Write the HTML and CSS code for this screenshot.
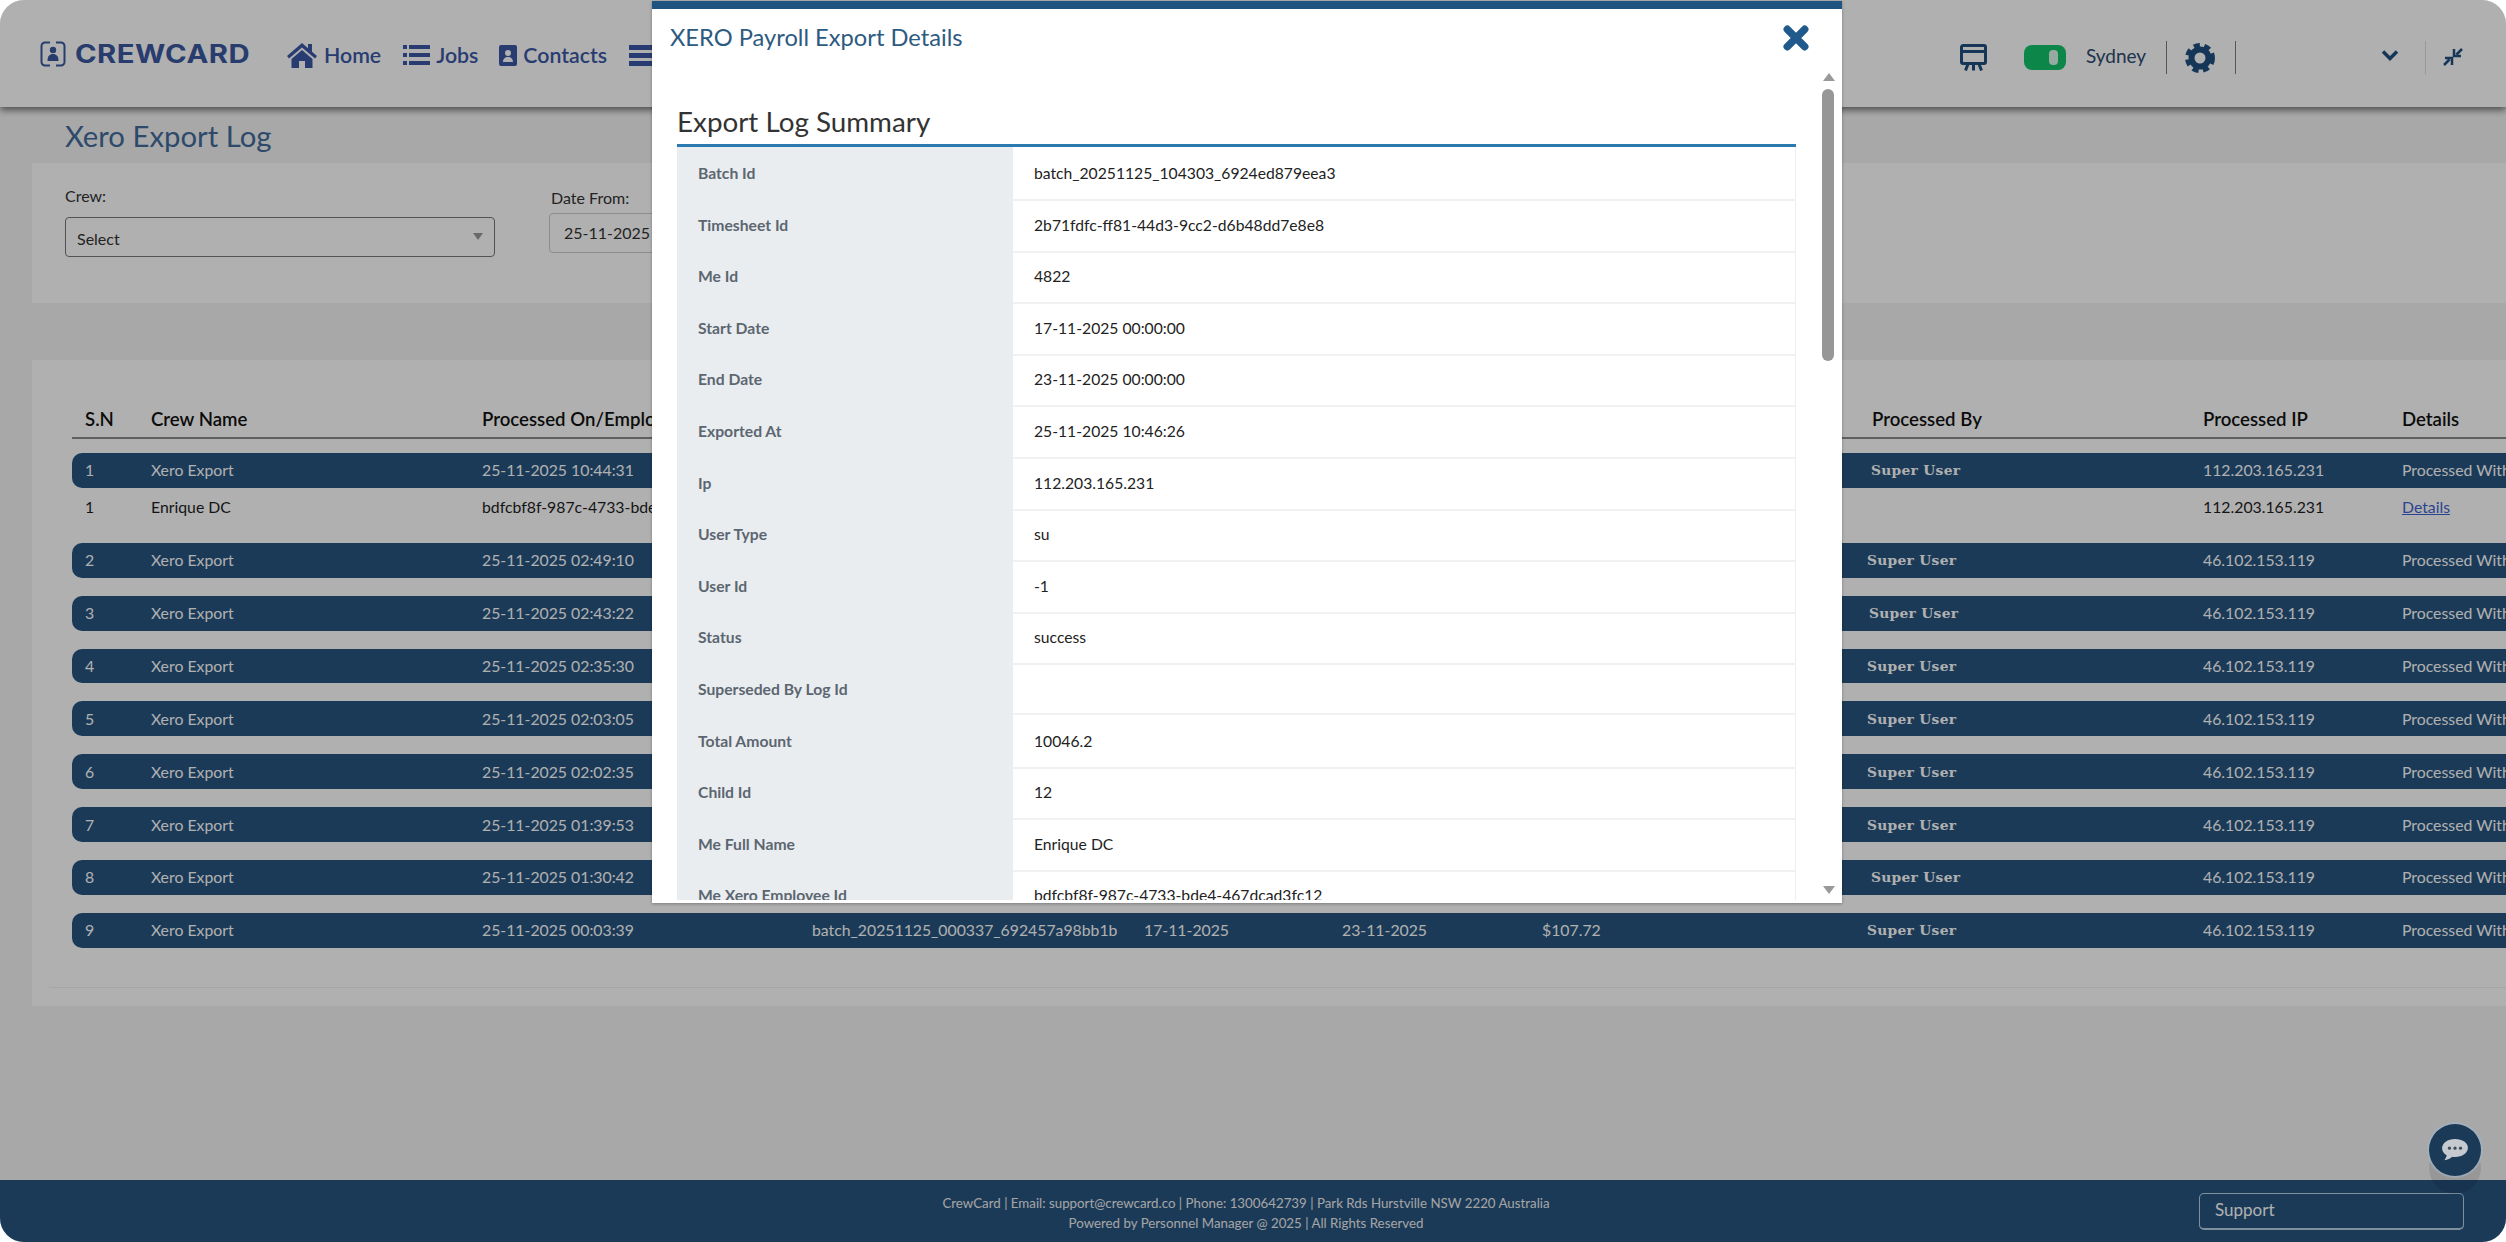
FILE: index.html
```html
<!DOCTYPE html>
<html lang="en">
<head>
<meta charset="utf-8">
<title>Xero Export Log</title>
<link rel="stylesheet" href="styles.css">
</head>
<body>
<div class="app">
  <header class="topbar">
    <div class="logo">
      <svg class="logo-icon" viewBox="0 0 26 26"><path d="M10 1.5H5A3.5 3.5 0 0 0 1.5 5v16A3.5 3.5 0 0 0 5 24.500h5M16 1.500h5A3.500 3.500 0 0 1 24.500 5v16a3.500 3.500 0 0 1-3.500 3.500h-5" fill="none" stroke="currentColor" stroke-width="2"/><circle cx="13" cy="9" r="3.200" fill="currentColor"/><path d="M7.500 20c0-5 2-7 5.500-7s5.500 2 5.500 7z" fill="currentColor"/></svg>
      <span class="logo-text">CREWCARD</span>
    </div>
    <nav class="nav">
      <a class="nav-item nav-home"><svg class="ico-home" viewBox="0 0 30 26"><path d="M15 1 0 14l2 2.500L15 5.500l13 11 2-2.500-5-4.300V2h-4v4.200z" fill="currentColor"/><path d="M15 8 4.500 17v9H12v-7h6v7h7.500v-9z" fill="currentColor"/></svg>Home</a>
      <a class="nav-item nav-jobs"><svg class="ico-list" viewBox="0 0 27 22"><path d="M0 1h4v4H0zM6 1h21v4H6zM0 9h4v4H0zM6 9h21v4H6zM0 17h4v4H0zM6 17h21v4H6z" fill="currentColor"/></svg>Jobs</a>
      <a class="nav-item nav-contacts"><svg class="ico-contact" viewBox="0 0 18 22"><path fill-rule="evenodd" d="M2 1h14a2 2 0 0 1 2 2v17a2 2 0 0 1-2 2H2a2 2 0 0 1-2-2V3a2 2 0 0 1 2-2zm7 5a3 3 0 1 0 0 6 3 3 0 0 0 0-6zm-5 12h10c0-3-2-5-5-5s-5 2-5 5z" fill="currentColor"/></svg>Contacts</a>
      <a class="nav-item"><svg class="ico-list" viewBox="0 0 27 22"><path d="M0 1h27v5H0zM0 9h27v5H0zM0 17h27v5H0z" fill="currentColor"/></svg></a>
    </nav>
    <div class="tools">
      <svg class="ico-screen" viewBox="0 0 27 27"><path d="M3 1.500h21a1.500 1.500 0 0 1 1.500 1.500v15a1.500 1.500 0 0 1-1.500 1.500H3A1.500 1.500 0 0 1 1.500 18V3A1.500 1.500 0 0 1 3 1.500zM1.500 7.500h24M8 20l-2.500 6.500M13.500 20v6.500M19 20l2.500 6.500" fill="none" stroke="currentColor" stroke-width="3"/></svg>
      <span class="toggle"><span class="knob"></span></span>
      <span class="city">Sydney</span>
      <span class="divider"></span>
      <svg class="ico-gear" viewBox="0 0 30 30"><circle cx="15" cy="15" r="8.500" fill="none" stroke="currentColor" stroke-width="6"/><circle cx="15" cy="15" r="12.500" fill="none" stroke="currentColor" stroke-width="5" stroke-dasharray="6 4.470"/></svg>
      <span class="divider"></span>
      <svg class="ico-chevron" viewBox="0 0 18 12"><path d="M2 2.500 9 9.500l7-7" fill="none" stroke="currentColor" stroke-width="3.500"/></svg>
      <span class="divider divider-faint"></span>
      <svg class="ico-compress" viewBox="0 0 20 18"><path d="M19 1 13.500 6.500M11 1v7h7M1 17l5.500-5.500M9 17v-7H2" fill="none" stroke="currentColor" stroke-width="2.500"/></svg>
    </div>
  </header>

  <main class="main">
    <h1 class="page-title">Xero Export Log</h1>
    <section class="filters">
      <div class="field">
        <label class="field-label">Crew:</label>
        <div class="select">Select<span class="caret"></span></div>
      </div>
      <div class="field field-date">
        <label class="field-label">Date From:</label>
        <div class="date-input">25-11-2025</div>
      </div>
    </section>

    <section class="log-card">
      <div class="log-row log-head">
        <span>S.N</span><span>Crew Name</span><span>Processed On/Employee Id</span><span></span><span></span><span></span><span></span><span>Processed By</span><span>Processed IP</span><span>Details</span>
      </div>
      <div class="log-row bar first"><span>1</span><span>Xero Export</span><span>25-11-2025 10:44:31</span><span></span><span></span><span></span><span></span><span class="by by-a">Super User</span><span>112.203.165.231</span><span>Processed With</span></div>
      <div class="log-row sub"><span>1</span><span>Enrique DC</span><span>bdfcbf8f-987c-4733-bde4-467dcad3fc12</span><span></span><span></span><span></span><span></span><span></span><span>112.203.165.231</span><span><a class="link">Details</a></span></div>
      <div class="log-row bar"><span>2</span><span>Xero Export</span><span>25-11-2025 02:49:10</span><span></span><span></span><span></span><span></span><span class="by by-c">Super User</span><span>46.102.153.119</span><span>Processed With</span></div>
      <div class="log-row bar"><span>3</span><span>Xero Export</span><span>25-11-2025 02:43:22</span><span></span><span></span><span></span><span></span><span class="by by-b">Super User</span><span>46.102.153.119</span><span>Processed With</span></div>
      <div class="log-row bar"><span>4</span><span>Xero Export</span><span>25-11-2025 02:35:30</span><span></span><span></span><span></span><span></span><span class="by by-c">Super User</span><span>46.102.153.119</span><span>Processed With</span></div>
      <div class="log-row bar"><span>5</span><span>Xero Export</span><span>25-11-2025 02:03:05</span><span></span><span></span><span></span><span></span><span class="by by-c">Super User</span><span>46.102.153.119</span><span>Processed With</span></div>
      <div class="log-row bar"><span>6</span><span>Xero Export</span><span>25-11-2025 02:02:35</span><span></span><span></span><span></span><span></span><span class="by by-c">Super User</span><span>46.102.153.119</span><span>Processed With</span></div>
      <div class="log-row bar"><span>7</span><span>Xero Export</span><span>25-11-2025 01:39:53</span><span></span><span></span><span></span><span></span><span class="by by-c">Super User</span><span>46.102.153.119</span><span>Processed With</span></div>
      <div class="log-row bar"><span>8</span><span>Xero Export</span><span>25-11-2025 01:30:42</span><span></span><span></span><span></span><span></span><span class="by by-a">Super User</span><span>46.102.153.119</span><span>Processed With</span></div>
      <div class="log-row bar"><span>9</span><span>Xero Export</span><span>25-11-2025 00:03:39</span><span>batch_20251125_000337_692457a98bb1b</span><span>17-11-2025</span><span>23-11-2025</span><span>$107.72</span><span class="by by-c">Super User</span><span>46.102.153.119</span><span>Processed With</span></div>
      <div class="card-rule"></div>
    </section>
  </main>

  <footer class="footer">
    <div class="footer-text">
      <p>CrewCard | Email: support@crewcard.co | Phone: 1300642739 | Park Rds Hurstville NSW 2220 Australia</p>
      <p>Powered by Personnel Manager @ 2025 | All Rights Reserved</p>
    </div>
    <div class="support">Support</div>
  </footer>

  <div class="chat-shadow"></div>
  <div class="overlay">
    <div class="modal">
      <div class="modal-head">
        <h2 class="modal-title">XERO Payroll Export Details</h2>
        <svg class="ico-close" viewBox="0 0 24 24"><path d="M4 4l16 16M20 4 4 20" fill="none" stroke="currentColor" stroke-width="7" stroke-linecap="round"/></svg>
      </div>
      <div class="modal-body">
        <h3 class="summary-title">Export Log Summary</h3>
        <div class="kv"><span class="k">Batch Id</span><span class="v">batch_20251125_104303_6924ed879eea3</span></div>
        <div class="kv"><span class="k">Timesheet Id</span><span class="v">2b71fdfc-ff81-44d3-9cc2-d6b48dd7e8e8</span></div>
        <div class="kv"><span class="k">Me Id</span><span class="v">4822</span></div>
        <div class="kv"><span class="k">Start Date</span><span class="v">17-11-2025 00:00:00</span></div>
        <div class="kv"><span class="k">End Date</span><span class="v">23-11-2025 00:00:00</span></div>
        <div class="kv"><span class="k">Exported At</span><span class="v">25-11-2025 10:46:26</span></div>
        <div class="kv"><span class="k">Ip</span><span class="v">112.203.165.231</span></div>
        <div class="kv"><span class="k">User Type</span><span class="v">su</span></div>
        <div class="kv"><span class="k">User Id</span><span class="v">-1</span></div>
        <div class="kv"><span class="k">Status</span><span class="v">success</span></div>
        <div class="kv"><span class="k">Superseded By Log Id</span><span class="v"></span></div>
        <div class="kv"><span class="k">Total Amount</span><span class="v">10046.2</span></div>
        <div class="kv"><span class="k">Child Id</span><span class="v">12</span></div>
        <div class="kv"><span class="k">Me Full Name</span><span class="v">Enrique DC</span></div>
        <div class="kv"><span class="k">Me Xero Employee Id</span><span class="v">bdfcbf8f-987c-4733-bde4-467dcad3fc12</span></div>
      </div>
      <div class="scrollbar">
        <span class="arrow-up"></span>
        <span class="thumb"></span>
        <span class="arrow-down"></span>
      </div>
    </div>
  </div>
  <div class="chat">
    <svg class="ico-chat" viewBox="0 0 30 26"><path d="M15 1C7 1 1 5.500 1 11c0 3.200 2 6 5 7.800-.3 2-1.300 3.700-2.500 5.200 3.500-.4 6.500-1.800 8.500-3.600 1 .1 2 .2 3 .2 8 0 14-4.500 14-10S23 1 15 1z" fill="#c4cacf"/><circle cx="9" cy="11" r="1.700" fill="#3e4a55"/><circle cx="15" cy="11" r="1.700" fill="#3e4a55"/><circle cx="21" cy="11" r="1.700" fill="#3e4a55"/></svg>
  </div>
</div>
</body>
</html>
```
FILE: styles.css
```css
* { box-sizing: border-box; }
html, body { margin: 0; height: 100%; background: #fff; overflow: hidden; }
body { font-family: Lato, "Open Sans", sans-serif; color: #222; }
h1, h2, h3, p { margin: 0; font-weight: 400; }

.app {
  position: relative;
  height: 1242px;
  display: flex;
  flex-direction: column;
  overflow: hidden;
  border-radius: 24px;
  background: #f4f4f4;
}

/* top bar */
.topbar {
  flex: 0 0 107px;
  display: flex;
  align-items: flex-start;
  background: #fff;
  box-shadow: 0 3px 7px rgba(0, 0, 0, .55);
  position: relative;
  color: #2c4f9a;
  padding: 41px 0 0 40px;
}
.logo { display: flex; align-items: center; gap: 9px; width: 247px; color: #3a58a0; }
.logo-icon { width: 26px; height: 26px; flex: none; }
.logo-text { font-family: Inter, sans-serif; font-weight: 700; font-size: 25px; letter-spacing: .4px; line-height: 26px; transform: scaleX(1.17); transform-origin: left center; }
.nav { display: flex; align-items: center; font-size: 21.300px; }
.nav-item { display: flex; align-items: center; gap: 7px; color: #3a58a6; height: 28px; font-weight: 600; }
.nav-jobs { margin-left: 22px; gap: 6px; }
.nav-contacts { margin-left: 21px; gap: 6px; }
.nav-item:last-child { margin-left: 22px; }
.ico-home { width: 30px; height: 26px; }
.ico-list { width: 27px; height: 22px; }
.ico-contact { width: 18px; height: 22px; }

.tools {
  position: absolute;
  left: 1960px;
  top: 41px;
  display: flex;
  align-items: center;
  height: 33px;
  color: #1f4f7f;
}
.ico-screen { width: 27px; height: 27px; }
.toggle { width: 42px; height: 25px; margin-left: 37px; border-radius: 8px; background: #13c46a; position: relative; }
.knob { position: absolute; left: 25px; top: 5px; width: 9px; height: 15px; border-radius: 4px; background: #fff; opacity: .85; }
.city { margin-left: 20px; margin-bottom: 5px; font-size: 19px; color: #2d4a70; width: 61px; white-space: nowrap; }
.divider { width: 1px; height: 33px; background: #7f7f7f; margin-left: 19px; }
.ico-gear { width: 30px; height: 30px; margin-left: 18px; }
.ico-gear + .divider { margin-left: 20px; }
.ico-chevron { width: 18px; height: 12px; margin-left: 145px; margin-bottom: 5px; }
.divider-faint { background: #dcdcdc; margin-left: 26px; }
.ico-compress { width: 20px; height: 18px; margin-left: 17px; margin-bottom: 2px; }

/* main */
.main { flex: 1; padding-left: 32px; min-height: 0; }
.page-title { margin: 7px 0 5px 33px; font-size: 29.300px; line-height: 44px; color: #436c9c; }
.filters { height: 140px; background: #fff; display: flex; padding: 22px 0 0 33px; }
.field { width: 486px; }
.field-label { display: block; font-size: 16px; line-height: 22px; color: #333; }
.select {
  position: relative;
  margin-top: 10px;
  width: 430px;
  height: 40px;
  border: 1px solid #777;
  border-radius: 4px;
  padding: 8px 11px 0;
  font-size: 16px;
  line-height: 26px;
  color: #333;
}
.caret { position: absolute; right: 11px; top: 15px; border: 5px solid transparent; border-top: 7px solid #999; border-bottom: 0; }
.field-date { margin-top: 2px; }
.date-input {
  margin-top: 4px;
  margin-left: -2px;
  width: 200px;
  height: 40px;
  border: 1px solid #ccc;
  border-radius: 4px;
  padding-left: 14px;
  font-size: 16px;
  line-height: 37px;
  color: #333;
}

.log-card { margin-top: 57px; height: 646px; background: #fff; padding: 42px 0 0 40px; position: relative; overflow: hidden; }
.log-row {
  display: grid;
  grid-template-columns: 66px 331px 330px 332px 198px 200px 330px 331px 199px 120px;
  width: 2434px;
  padding-left: 13px;
  white-space: nowrap;
  align-items: center;
  font-size: 15.800px;
}
.log-head { height: 37px; border-bottom: 2px solid #8a8a8a; font-size: 18.600px; font-weight: 600; color: #111; margin-bottom: 14px; padding-bottom: 2px; }
.bar { height: 34.860px; line-height: 32px; background: #265480; color: #fff; border-radius: 10px 0 0 10px; margin-bottom: 18px; }
.first { margin-bottom: 0; }
.sub { height: 55px; padding-bottom: 18px; color: #1d1d1d; }
.by { font-family: "DejaVu Serif", serif; font-weight: 700; font-size: 13.800px; letter-spacing: .3px; }
.by-a { margin-left: -1px; }
.by-b { margin-left: -3px; }
.by-c { margin-left: -5px; }
.link { color: #3f63d1; text-decoration: underline; }
.card-rule { position: absolute; left: 17px; right: 0; top: 627px; border-top: 1px solid #f0f0f0; }

/* footer */
.footer {
  flex: 0 0 62px;
  background: #265480;
  color: #fff;
  display: flex;
  padding: 13px 42px 0 0;
}
.footer-text { width: 2199px; padding-left: 293px; text-align: center; font-size: 13.300px; line-height: 20px; font-weight: 700; color: #eee; }
.support {
  width: 265px;
  height: 37px;
  border: 1px solid #b9d3e5;
  border-bottom-width: 2px;
  border-radius: 5px;
  padding-left: 15px;
  font-size: 17px;
  line-height: 32px;
  color: #fff;
}

/* modal */
.overlay {
  position: absolute;
  inset: 0;
  background: rgba(0, 0, 0, .31);
  padding: 1px 0 0 652px;
}
.modal {
  position: relative;
  width: 1190px;
  height: 902px;
  display: flex;
  flex-direction: column;
  background: #fff;
  border-top: 8px solid #205480;
  padding-bottom: 3px;
  box-shadow: 0 1px 3px rgba(0, 0, 0, .3);
}
.modal-head { flex: 0 0 auto; height: 76px; display: flex; justify-content: space-between; padding: 13px 33px 0 18px; }
.modal-title { font-size: 23.700px; line-height: 30px; color: #2d5a80; }
.ico-close { width: 26px; height: 26px; margin-top: 3px; color: #205a8c; }
.modal-body { flex: 1; min-height: 0; overflow: hidden; padding: 0 46px 0 25px; }
.summary-title { font-size: 27.800px; line-height: 40px; box-sizing: content-box; height: 40px; padding-top: 17px; padding-bottom: 2px; border-bottom: 3px solid #2a7ab0; color: #333; }
.kv { display: grid; grid-template-columns: 336px 1fr; height: 51.600px; font-size: 15.700px; }
.k { background: #e9edf0; color: #5c6670; font-weight: 700; padding-left: 21px; line-height: 52px; }
.v { color: #222; padding-left: 21px; line-height: 52px; border-bottom: 2px solid #f1f1f1; border-right: 1px solid #eee; }

.scrollbar { position: absolute; left: 1170px; top: 62px; width: 14px; height: 830px; }
.arrow-up { position: absolute; left: 1px; top: 2px; border: 6px solid transparent; border-bottom: 8px solid #999; border-top: 0; }
.thumb { position: absolute; left: 0; top: 18px; width: 12px; height: 272px; border-radius: 6px; background: #979797; }
.arrow-down { position: absolute; left: 1px; top: 815px; border: 6px solid transparent; border-top: 8px solid #999; border-bottom: 0; }

/* chat */
.chat {
  position: absolute;
  left: 2429px;
  top: 1124px;
  width: 52px;
  height: 52px;
  border-radius: 50%;
  background: #1a3a58;
  box-shadow: 0 0 0 2px rgba(160, 180, 200, .6);
  display: flex;
  align-items: center;
  justify-content: center;
}
.ico-chat { width: 28px; height: 24px; }
.chat-shadow { position: absolute; left: 2429px; top: 1142px; width: 52px; height: 52px; border-radius: 50%; background: rgba(0, 0, 0, .1); }
```
